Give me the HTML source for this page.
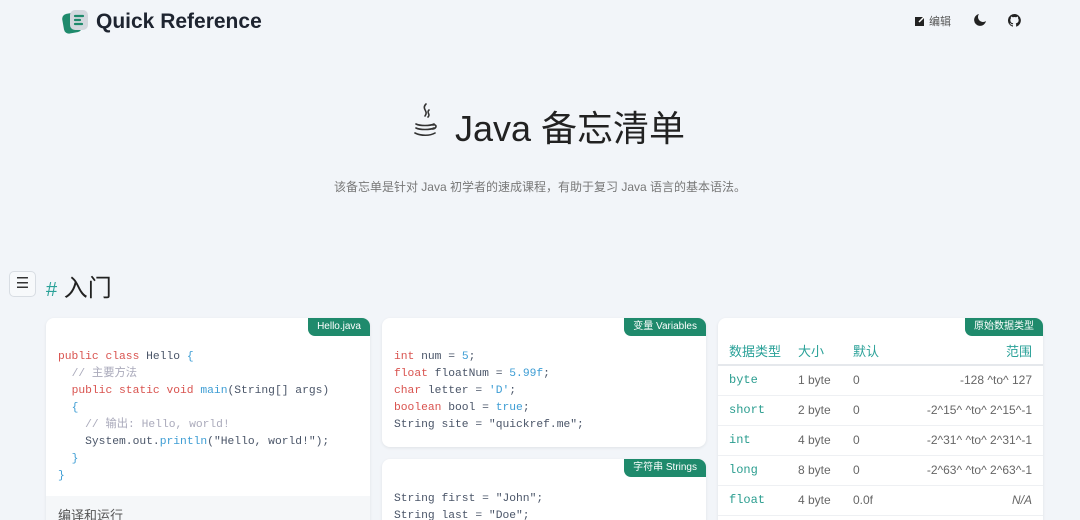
<!DOCTYPE html>
<html><head><meta charset="utf-8"><style>
*{margin:0;padding:0;box-sizing:border-box}
html,body{width:1080px;height:520px;overflow:hidden}
body{background:#f2f5f9;font-family:"Liberation Sans","Noto Sans CJK SC",sans-serif;color:#333;position:relative}
.abs{position:absolute}
.logo{left:62px;top:9px;font-weight:bold;font-size:21px;color:#1e2430;display:flex;align-items:center}
.card{position:absolute;background:#fff;border-radius:8px;box-shadow:0 1px 3px rgba(0,0,0,.08);overflow:hidden}
.tag{position:absolute;right:0;top:0;background:#1f8a6c;color:#fff;font-size:10px;padding:2px 9px 3px;border-bottom-left-radius:7px;line-height:13px}
pre{font-family:"Liberation Mono","Noto Sans CJK SC",monospace;font-size:11.3px;line-height:17px;color:#4a5568;position:absolute;left:12px}
.k{color:#d9534f}.c{color:#aab}.b{color:#3d9dd4}.n{color:#3d9dd4}
table{border-collapse:collapse;width:100%;font-size:12px;color:#666;table-layout:fixed}
td,th{height:30px;padding:0 11px;text-align:left;border-bottom:1px solid #eef0f3;white-space:nowrap}
th{color:#2aa198;font-weight:normal;font-size:13px;height:29px;border-bottom:2px solid #e5e8ec}
td:first-child{font-family:"Liberation Mono",monospace;color:#2a9d8f}
.r{text-align:right}
</style></head><body>
<div class="abs logo"><svg width="28" height="26" viewBox="0 0 28 26"><rect x="1" y="4" width="18" height="20" rx="5" fill="#1f8a6c" transform="rotate(-10 10 14)"/><rect x="8" y="1" width="18" height="20" rx="5" fill="#d3d8de"/><path d="M13 7h8M13 11h5M13 15h7" stroke="#1f8a6c" stroke-width="2.2" stroke-linecap="round"/></svg><span style="margin-left:6px">Quick Reference</span></div>
<div class="abs" style="left:915px;top:13px;font-size:11px;color:#555;display:flex;align-items:center"><svg width="10" height="10"><rect x="0" y="1" width="9" height="9" fill="#222"/><path d="M4 6l5-5" stroke="#fff" stroke-width="1.5"/></svg><span style="margin-left:4px">编辑</span></div>
<svg class="abs" style="left:974px;top:14px" width="12" height="12" viewBox="0 0 12 12"><path d="M5 0a6 6 0 1 0 7 7A5 5 0 0 1 5 0z" fill="#222"/></svg>
<svg class="abs" style="left:1008px;top:14px" width="13" height="13" viewBox="0 0 16 16"><path fill="#222" d="M8 0a8 8 0 0 0-2.5 15.6c.4 0 .5-.2.5-.4v-1.5c-2.2.5-2.7-1-2.7-1-.4-.9-.9-1.2-.9-1.2-.7-.5.1-.5.1-.5.8.1 1.2.8 1.2.8.7 1.3 1.9.9 2.3.7.1-.5.3-.9.5-1.1-1.8-.2-3.6-.9-3.6-4 0-.9.3-1.6.8-2.1-.1-.2-.4-1 .1-2.1 0 0 .7-.2 2.2.8a7.5 7.5 0 0 1 4 0c1.5-1 2.2-.8 2.2-.8.4 1.1.2 1.9.1 2.1.5.6.8 1.3.8 2.1 0 3.1-1.9 3.8-3.6 4 .3.3.5.8.5 1.5v2.2c0 .2.1.5.6.4A8 8 0 0 0 8 0z"/></svg>
<svg class="abs" style="left:410px;top:102px" width="30" height="38" viewBox="0 0 30 38"><g fill="none" stroke="#333" stroke-width="1.6" stroke-linecap="round"><path d="M16 2c-5 5 3 7-1 12M19 8c-3 3 2 4-1 7"/><path d="M6 22c4 2 14 2 18 0M6 26c4 2 14 2 18 0M5 31c6 3 15 3 20 0M23 23c4-1 4 3 0 4"/></g></svg>
<div class="abs" style="left:455px;top:100px;font-size:36px;color:#222;white-space:nowrap">Java 备忘清单</div>
<div class="abs" style="left:0;width:1080px;top:178px;text-align:center;font-size:12px;color:#777">该备忘单是针对 Java 初学者的速成课程，有助于复习 Java 语言的基本语法。</div>
<div class="abs" style="left:9px;top:271px;width:27px;height:26px;border:1px solid #d8dde3;border-radius:5px;background:#f7f9fb;text-align:center;font-size:15px;line-height:24px">☰</div>
<div class="abs" style="left:46px;top:268px;font-size:24px;color:#222"><span style="color:#2aa198;font-size:20px">#</span> 入门</div>

<div class="card" style="left:46px;top:318px;width:324px;height:220px"><div class="tag">Hello.java</div>
<pre style="top:31px"><span class="k">public class</span> Hello <span class="b">{</span>
  <span class="c">// 主要方法</span>
  <span class="k">public static void</span> <span class="b">main</span>(String[] args)
  <span class="b">{</span>
    <span class="c">// 输出: Hello, world!</span>
    System.out.<span class="b">println</span>("Hello, world!");
  <span class="b">}</span>
<span class="b">}</span></pre>
<div class="abs" style="left:0;top:178px;width:100%;height:50px;background:#f5f7f9;padding:9px 12px;font-size:13px;color:#555">编译和运行</div></div>

<div class="card" style="left:382px;top:318px;width:324px;height:129px"><div class="tag">变量 Variables</div>
<pre style="top:31px"><span class="k">int</span> num = <span class="n">5</span>;
<span class="k">float</span> floatNum = <span class="n">5.99f</span>;
<span class="k">char</span> letter = <span class="n">'D'</span>;
<span class="k">boolean</span> bool = <span class="n">true</span>;
String site = "quickref.me";</pre></div>

<div class="card" style="left:382px;top:459px;width:324px;height:80px"><div class="tag">字符串 Strings</div>
<pre style="top:32px">String first = "John";
String last = "Doe";</pre></div>

<div class="card" style="left:718px;top:318px;width:325px;height:220px"><div class="tag">原始数据类型</div>
<table style="margin-top:18px"><colgroup><col style="width:69px"><col style="width:55px"><col style="width:60px"><col></colgroup><tr><th>数据类型</th><th>大小</th><th>默认</th><th class="r">范围</th></tr>
<tr><td>byte</td><td>1 byte</td><td>0</td><td class="r">-128 ^to^ 127</td></tr>
<tr><td>short</td><td>2 byte</td><td>0</td><td class="r">-2^15^ ^to^ 2^15^-1</td></tr>
<tr><td>int</td><td>4 byte</td><td>0</td><td class="r">-2^31^ ^to^ 2^31^-1</td></tr>
<tr><td>long</td><td>8 byte</td><td>0</td><td class="r">-2^63^ ^to^ 2^63^-1</td></tr>
<tr><td>float</td><td>4 byte</td><td>0.0f</td><td class="r"><i>N/A</i></td></tr>
</table></div>
</body></html>
